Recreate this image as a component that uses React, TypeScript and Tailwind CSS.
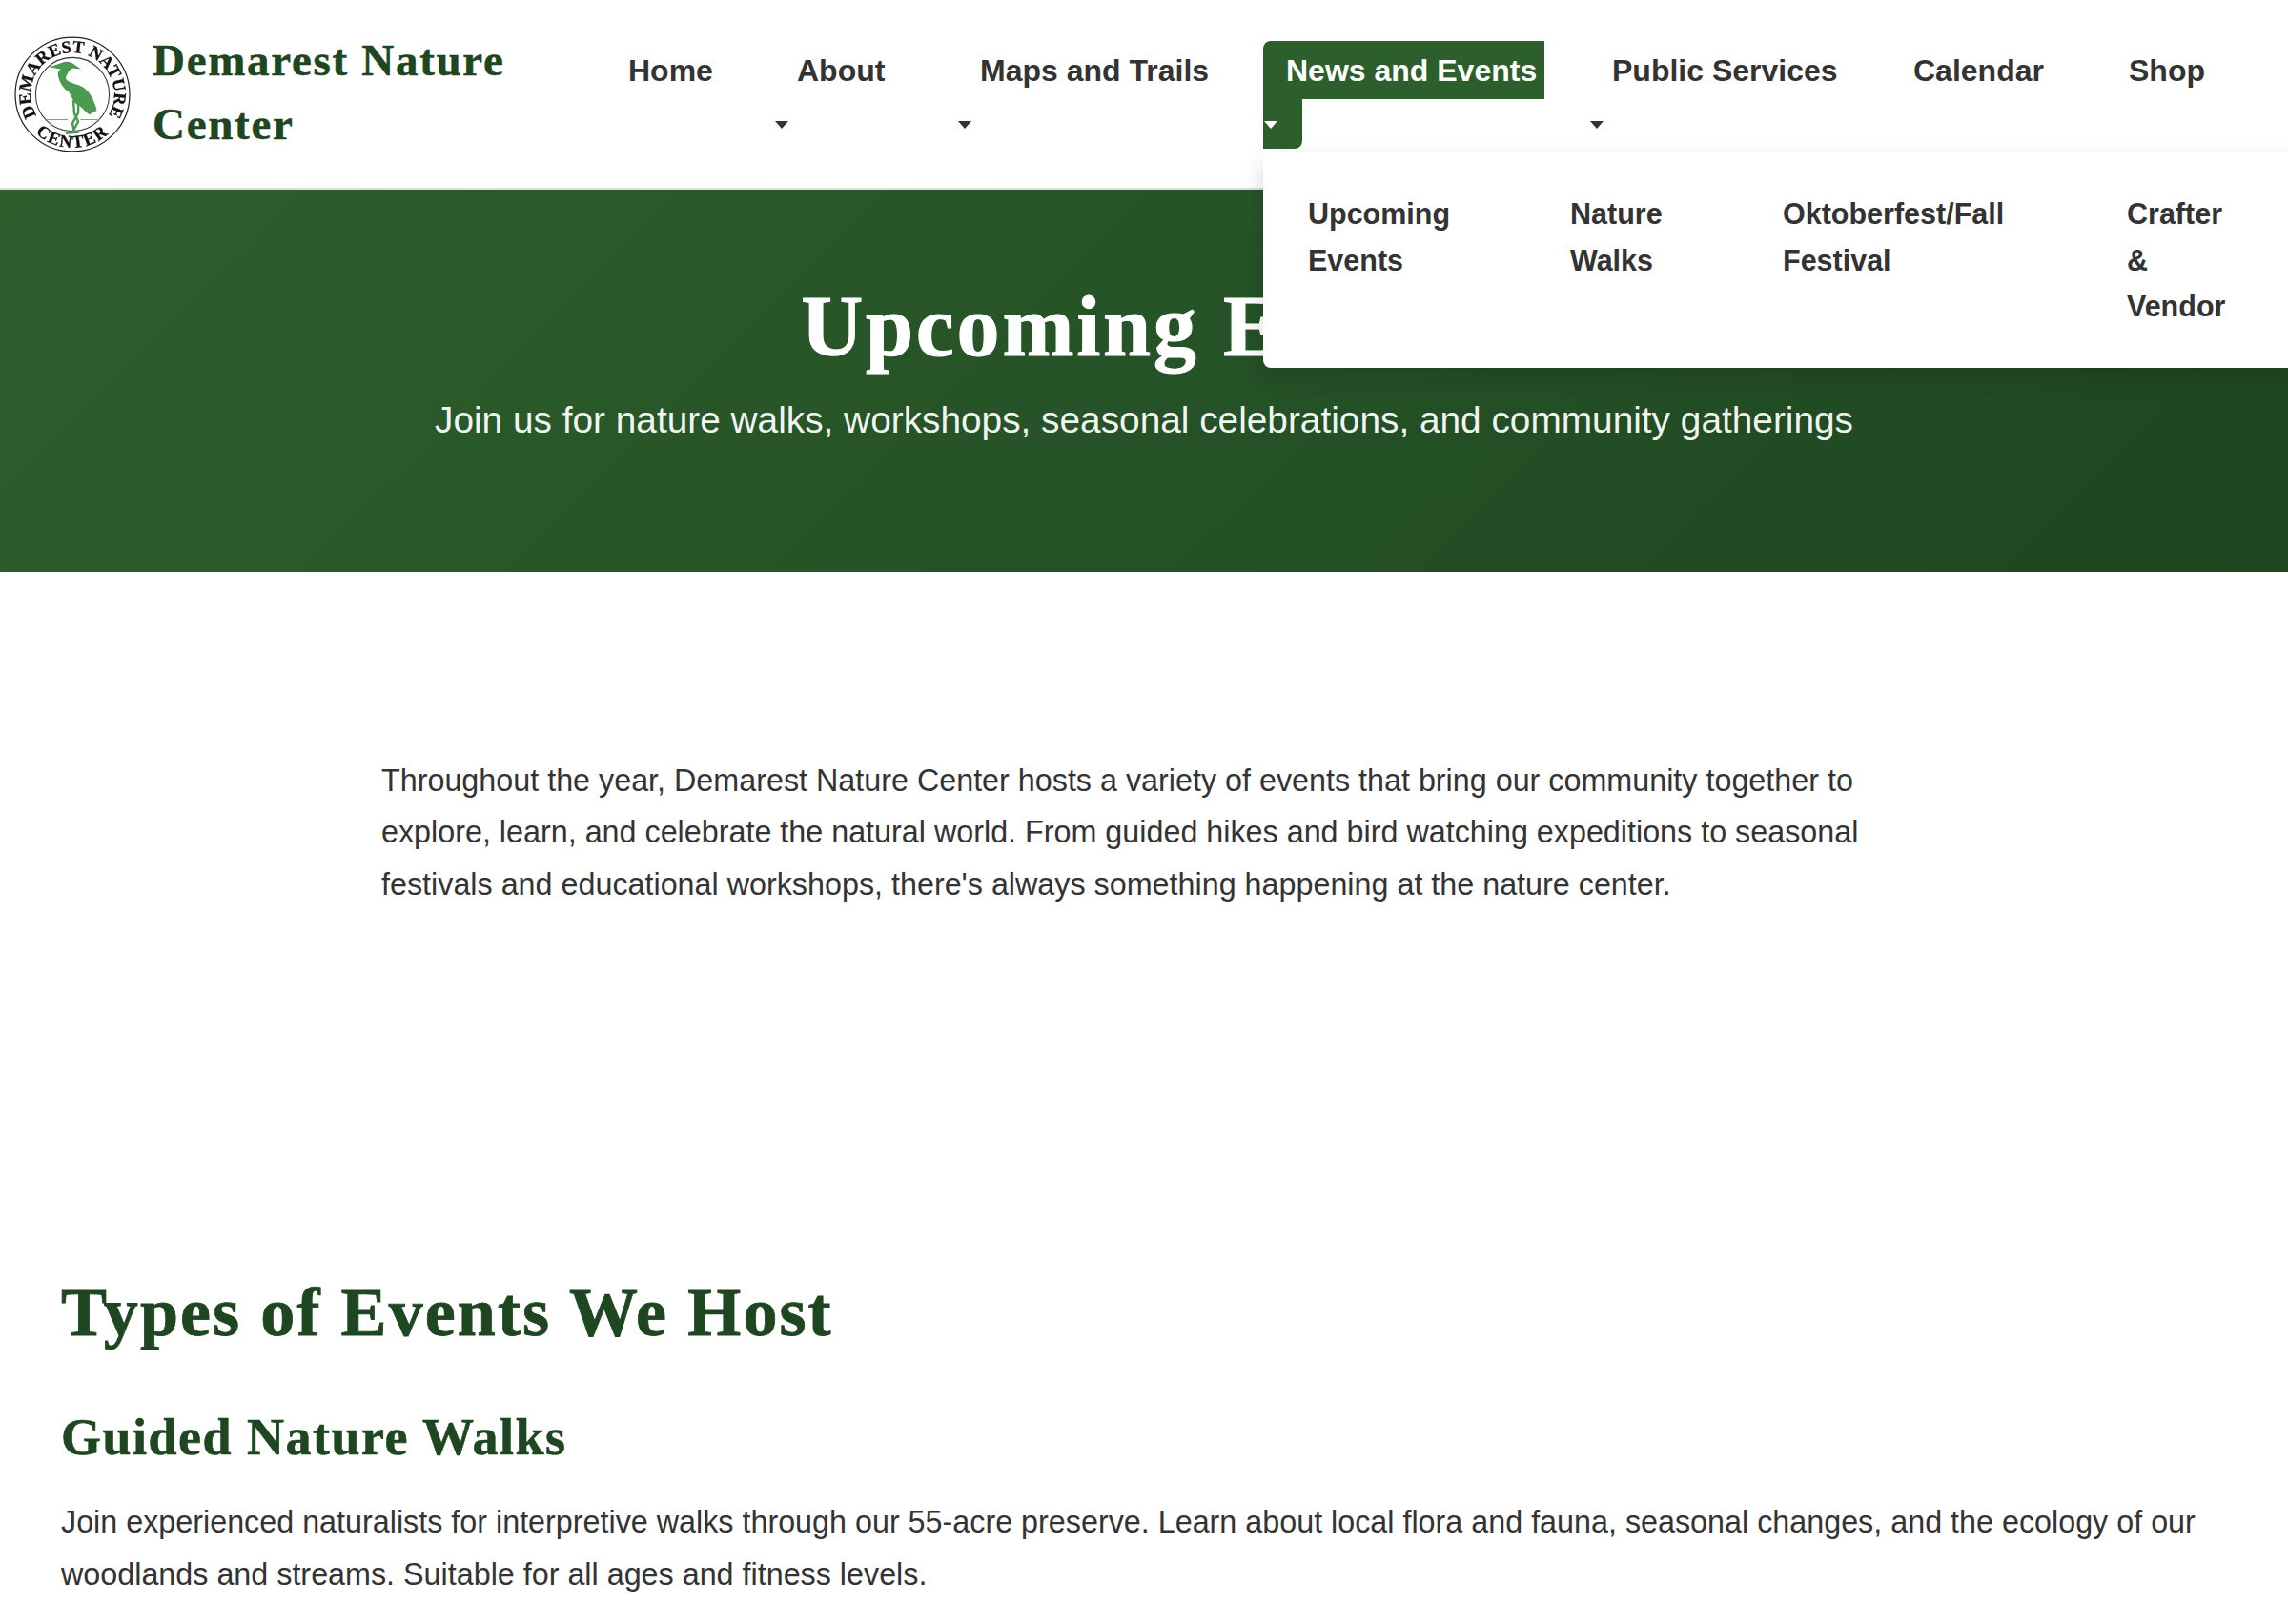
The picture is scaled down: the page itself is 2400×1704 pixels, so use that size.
const navItems = [
  { label: 'Home', width: 'w-[137px]', caret: false },
  { label: 'About', width: 'w-[152px]', caret: true },
  { label: 'Maps and Trails', width: 'w-[281px]', caret: true },
  { label: 'News and Events', width: 'w-[302px]', caret: true, active: true },
  { label: 'Public Services', width: 'w-[276px]', caret: true },
  { label: 'Calendar', width: 'w-[186px]', caret: false },
  { label: 'Shop', width: 'w-[130px]', caret: false },
]

const dropdownItems = [
  { label: 'Upcoming Events', width: 'w-[275px] pr-6' },
  { label: 'Nature Walks', width: 'w-[223px] pr-[90px]' },
  { label: 'Oktoberfest/Fall Festival', width: 'w-[361px] pr-6' },
  { label: 'Crafter & Vendor', width: 'w-[120px] pr-1' },
]

function Logo() {
  return (
    <svg viewBox="0 0 120 120" className="w-[122px] h-[122px] shrink-0 blur-[0.4px]">
      <defs>
        <path id="arcTop" d="M 23.1 82 A 43 43 0 1 1 96.9 82" />
        <path id="arcBottom" d="M 10.5 84 A 55 55 0 0 0 109.5 84" />
      </defs>
      <circle cx="60" cy="60" r="59" fill="#fff" stroke="#222" strokeWidth="1.2" />
      <circle cx="60" cy="60" r="38" fill="#fff" stroke="#333" strokeWidth="1" />
      <text fontFamily="'Liberation Serif', serif" fontWeight="700" fontSize="18" fill="#111" stroke="#111" strokeWidth="0.3">
        <textPath href="#arcTop">DEMAREST NATURE</textPath>
      </text>
      <text fontFamily="'Liberation Serif', serif" fontWeight="700" fontSize="18" letterSpacing="1.5" fill="#111" stroke="#111" strokeWidth="0.3">
        <textPath href="#arcBottom" startOffset="50%" textAnchor="middle">CENTER</textPath>
      </text>
      <path
        d="M36 32 L50 27 C54 25 60 27 63 30 L69 34 L60 33 C57 35 54 39 53 43 C54 47 60 48 65 50 C72 52 78 58 81 65 C83 70 85 74 85 77 L82 78 L78 81 C74 79 72 76 70 74 L64 70 C60 66 58 60 56 57 C50 54 46 46 45 40 C45 37 46 35 48 34 Z"
        fill="#4a9a50"
      />
      <path d="M66 69 L66 79 L60 90 L62 99 M61 66 L62 80 L66 88 L60 99 M53 100 L67 99" fill="none" stroke="#4a9a50" strokeWidth="2.4" />
      <path d="M33 86 H55 M68 86 H88" stroke="#6fb276" strokeWidth="1" />
    </svg>
  )
}

function NavItem({ label, width, caret, active }: { label: string; width: string; caret: boolean; active?: boolean }) {
  return (
    <li className={`${width} shrink-0 leading-[54.4px]`}>
      <a
        href="#"
        className={`font-bold rounded-lg pt-[13px] pb-[10px] ${caret ? 'pr-6' : 'px-6'} ${active ? 'bg-[#2d5f2d] text-white' : 'text-[#333333]'}`}
      >
        {caret ? <span className="pl-6 pr-2 pb-[12px] bg-inherit">{label}</span> : label}
        {caret && <br />}
        {caret && (
          <span
            className={`inline-block align-middle ml-px w-0 h-0 border-x-[7px] border-x-transparent border-t-[8px] mr-[2px] ${active ? 'border-t-white' : 'border-t-[#333333]'}`}
          />
        )}
      </a>
    </li>
  )
}

export default function App() {
  return (
    <div className="relative h-[1704px] overflow-hidden bg-white font-['Liberation_Sans',Arial,sans-serif] text-[32px] text-[#333333]">
      {/* Header */}
      <header className="flex items-start h-[199px] border-b-2 border-[#dddddd] pl-[15px]">
        <div className="flex items-center gap-[23px] w-[620px] h-[197px]">
          <Logo />
          <div className="font-['Liberation_Serif',serif] font-bold text-[47px] tracking-[1.7px] leading-[67px] -mt-[3px] [-webkit-text-stroke:0.5px_currentColor] text-[#1e4620] w-[400px]">
            Demarest Nature Center
          </div>
        </div>
        <ul className="flex gap-10 pt-[47px]">
          {navItems.map((item) => (
            <NavItem key={item.label} {...item} />
          ))}
        </ul>
      </header>

      {/* News and Events dropdown */}
      <div className="absolute left-[1325px] right-0 top-[160px] h-[226px] z-10 bg-white rounded-l-lg shadow-[0_8px_24px_rgba(0,0,0,0.15)] pl-[47px] pt-[40px]">
        <ul className="flex font-bold text-[30.5px] leading-[48.6px]">
          {dropdownItems.map((item) => (
            <li key={item.label} className={`${item.width} shrink-0`}>
              {item.label}
            </li>
          ))}
        </ul>
      </div>

      {/* Hero */}
      <section className="h-[401px] bg-[linear-gradient(135deg,#2d5f2d,#1e4620)] text-center text-white pt-[96px]">
        <h1 className="font-['Liberation_Serif',serif] font-bold text-[90px] tracking-[2.8px] leading-[96px] [-webkit-text-stroke:1px_currentColor]">
          Upcoming Events
        </h1>
        <p className="text-[38.8px] leading-[54px] mt-[23px] text-white/95">
          Join us for nature walks, workshops, seasonal celebrations, and community gatherings
        </p>
      </section>

      {/* Intro */}
      <section className="w-[1600px] mx-auto pt-[192px] text-[32.3px] leading-[54.4px]">
        <p>
          Throughout the year, Demarest Nature Center hosts a variety of events that bring our community together to
          explore, learn, and celebrate the natural world. From guided hikes and bird watching expeditions to seasonal
          festivals and educational workshops, there's always something happening at the nature center.
        </p>
      </section>

      {/* Types of events */}
      <section className="px-16 pt-[378px]">
        <h2 className="font-['Liberation_Serif',serif] font-bold text-[72px] tracking-[2.1px] leading-[88px] [-webkit-text-stroke:0.8px_currentColor] text-[#1e4620]">
          Types of Events We Host
        </h2>
        <h3 className="font-['Liberation_Serif',serif] font-bold text-[54px] tracking-[1.5px] leading-[64px] [-webkit-text-stroke:0.6px_currentColor] text-[#1e4620] mt-[55px]">
          Guided Nature Walks
        </h3>
        <p className="text-[32.3px] leading-[54.4px] mt-[30px]">
          Join experienced naturalists for interpretive walks through our 55-acre preserve. Learn about local flora and
          fauna, seasonal changes, and the ecology of our woodlands and streams. Suitable for all ages and fitness levels.
        </p>
      </section>
    </div>
  )
}
